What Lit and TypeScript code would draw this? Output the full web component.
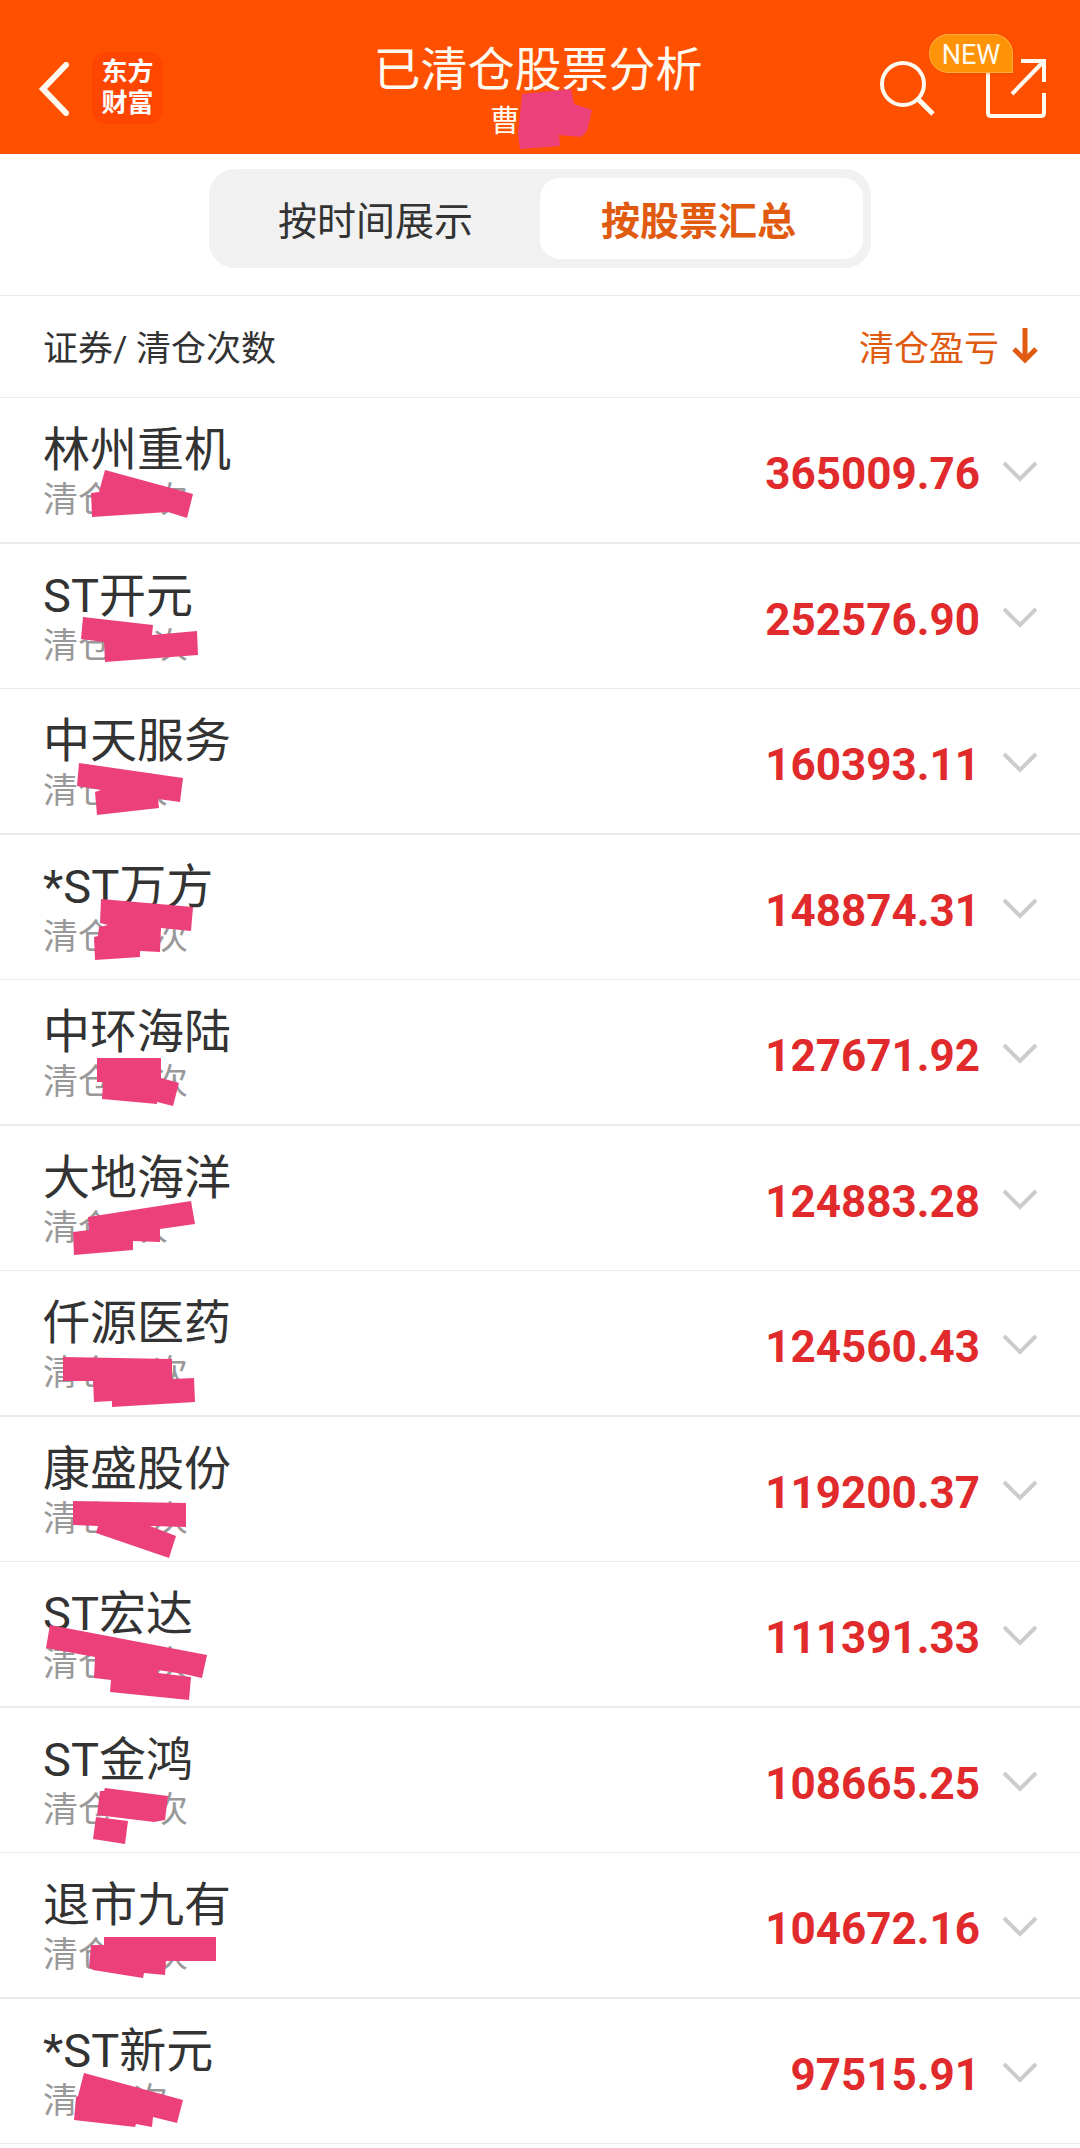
import { LitElement, html, css, svg } from "lit";
import { customElement, property, state } from "lit/decorators.js";
import { classMap } from "lit/directives/class-map.js";

interface Holding {
  name: string;
  amount: string;
  digits: 1 | 2;
  marks: string[];
}

/* marks: marker strokes over the count, in the row's own coordinates */
const HOLDINGS: Holding[] = [
  { name: "林州重机", amount: "365009.76", digits: 2, marks: ["105,72 193,96 187,120 168,114 92,119 91,95 99,94"] },
  { name: "ST开元", amount: "252576.90", digits: 2, marks: ["83,73 153,81 152,91 197,87 198,111 105,118 104,98 81,95"] },
  { name: "中天服务", amount: "160393.11", digits: 1, marks: ["79,74 183,89 180,113 158,110 159,119 97,126 95,103 101,101 77,97"] },
  { name: "*ST万方", amount: "148874.31", digits: 2, marks: ["101,64 193,72 191,96 161,93 160,117 140,116 140,122 95,125 94,102 98,101 99,92 108,90 100,88"] },
  { name: "中环海陆", amount: "127671.92", digits: 2, marks: ["97,78 161,78 161,98 179,103 173,126 157,122 157,124 102,119 103,102 97,102"] },
  { name: "大地海洋", amount: "124883.28", digits: 1, marks: ["88,91 191,75 195,98 160,103 160,116 133,115 133,124 74,129 73,106 89,104"] },
  { name: "仟源医药", amount: "124560.43", digits: 2, marks: ["63,86 172,88 172,108 194,107 195,131 112,136 112,130 94,131 93,110 63,110"] },
  { name: "康盛股份", amount: "119200.37", digits: 2, marks: ["73,84 186,86 186,110 150,109 176,119 169,141 96,116 98,109 73,108"] },
  { name: "ST宏达", amount: "111391.33", digits: 2, marks: ["50,63 207,93 202,116 184,112 158,108 158,111 191,115 189,138 110,130 111,118 94,116 95,95 46,86"] },
  { name: "ST金鸿", amount: "108665.25", digits: 2, marks: ["105,80 168,88 165,112 154,114 97,107 100,83 104,83", "96,109 128,113 125,136 93,131"] },
  { name: "退市九有", amount: "104672.16", digits: 2, marks: ["104,84 216,84 216,108 166,108 165,122 144,120 143,125 93,117 89,114 91,92 104,92"] },
  { name: "*ST新元", amount: "97515.91", digits: 1, marks: ["84,74 183,101 177,124 153,118 152,128 136,125 135,128 74,121 76,98 78,97"] },
];

const FONT = css`
  :host {
    font-family: Roboto, "Noto Sans CJK SC", sans-serif;
  }
  button {
    margin: 0;
    padding: 0;
    border: 0;
    background: none;
    color: inherit;
    font: inherit;
    cursor: pointer;
  }
  svg {
    display: block;
    flex: none;
  }
`;

@customElement("app-header")
class AppHeader extends LitElement {
  static styles = [
    FONT,
    css`
      :host {
        display: grid;
        grid-template-columns: 1fr auto 1fr;
        box-sizing: border-box;
        height: 154px;
        padding: 34px 33px 0;
        background: #ff5000;
        color: #fffaf0;
      }
      .left,
      .right {
        display: flex;
        align-items: flex-start;
      }
      .left {
        gap: 22px;
        padding: 18px 0 0 5px;
      }
      .back {
        padding-top: 10px;
      }
      .logo {
        display: grid;
        justify-content: center;
        align-content: center;
        width: 71px;
        height: 72px;
        border-radius: 14px;
        background: #ff4600;
        color: #fff;
        font-size: 26px;
        font-weight: 700;
        line-height: 31px;
        text-decoration: none;
      }
      .center {
        display: flex;
        flex-direction: column;
        align-items: center;
        padding: 8px 4px 0 0;
      }
      .title {
        margin: 0;
        font-size: 47px;
        font-weight: 400;
        line-height: 56px;
      }
      .account {
        position: relative;
        width: 96px;
        font-size: 30px;
        line-height: 46px;
      }
      .scrub {
        position: absolute;
        left: 28px;
        top: -10px;
      }
      .right {
        justify-content: flex-end;
        gap: 50px;
      }
      .search {
        padding-top: 26px;
      }
      .share {
        position: relative;
        padding-top: 23px;
      }
      .badge {
        position: absolute;
        right: 34px;
        top: 0;
        box-sizing: border-box;
        width: 84px;
        height: 39px;
        border: 1px solid #ffae3c;
        border-radius: 20px 20px 1px 20px;
        background: #ff9307;
        font-size: 27px;
        line-height: 40px;
        text-align: center;
        box-shadow: 0 1px 3px #d8430066;
      }
    `,
  ];

  render() {
    return html`
      <div class="left">
        <button class="back" aria-label="返回">
          <svg width="32" height="54" viewBox="0 0 32 54" fill="none" stroke="currentColor" stroke-width="6">
            <path d="M28 3 5 27 28 51" stroke-linecap="round" />
          </svg>
        </button>
        <a class="logo" href="#"><span>东方</span><span>财富</span></a>
      </div>
      <div class="center">
        <h1 class="title">已清仓股票分析</h1>
        <div class="account">
          曹
          <svg class="scrub" width="76" height="62" viewBox="519 87 76 62" fill="#ec407a" aria-hidden="true">
            <polygon points="523,93 572,88 575,103 593,109 588,130 585,133 582,136 560,134 561,145 521,148 519,133" />
          </svg>
        </div>
      </div>
      <div class="right">
        <button class="search" aria-label="搜索">
          <svg width="56" height="56" viewBox="0 0 56 56" fill="none" stroke="currentColor" stroke-width="4">
            <circle cx="24" cy="24" r="21" />
            <path d="M39 39 54 54" stroke-width="5" />
          </svg>
        </button>
        <button class="share" aria-label="分享">
          <svg width="62" height="62" viewBox="0 0 62 62" fill="none" stroke="currentColor" stroke-width="4">
            <path d="M3 10V56Q3 59 6 59H56Q59 59 59 56V36" />
            <path d="M36 4H59V25M58 5 27 37" />
          </svg>
          <span class="badge">NEW</span>
        </button>
      </div>
    `;
  }
}

@customElement("holding-row")
class HoldingRow extends LitElement {
  @property({ attribute: false }) item!: Holding;
  @state() private open = false;

  static styles = [
    FONT,
    css`
      :host {
        display: block;
        position: relative;
      }
      .row {
        display: flex;
        align-items: center;
        justify-content: space-between;
        box-sizing: border-box;
        width: 100%;
        height: 144px;
        padding: 4px 42px 0 43px;
        text-align: left;
      }
      .info {
        display: grid;
        padding-top: 4px;
      }
      .name {
        color: #333;
        font-size: 47px;
        line-height: 54px;
      }
      .count {
        display: flex;
        color: #999;
        font-size: 35px;
        line-height: 48px;
      }
      .gap {
        width: 20px;
      }
      .gap.wide {
        width: 40px;
      }
      .value {
        display: flex;
        align-items: center;
        gap: 22px;
        color: #e12a2b;
        font-size: 44px;
        font-weight: 700;
        line-height: 52px;
      }
      .amount {
        padding-top: 4px;
      }
      .marks {
        position: absolute;
        left: 0;
        top: 0;
        pointer-events: none;
      }
    `,
  ];

  render() {
    const { name, amount, digits, marks } = this.item;
    return html`
      <button class="row" aria-expanded=${this.open} @click=${() => (this.open = !this.open)}>
        <span class="info">
          <span class="name">${name}</span>
          <span class="count">清仓<span class=${classMap({ gap: true, wide: digits === 2 })}></span>次</span>
        </span>
        <span class="value">
          <span class="amount">${amount}</span>
          <svg width="36" height="22" viewBox="0 0 36 22" fill="none" stroke="#ccc" stroke-width="4">
            <path d="M2 2 18 18 34 2" />
          </svg>
        </span>
      </button>
      <svg class="marks" width="220" height="144" viewBox="0 0 220 144" fill="#ec407a" aria-hidden="true">
        ${marks.map((points) => svg`<polygon points=${points} />`)}
      </svg>
    `;
  }
}

@customElement("app-root")
class AppRoot extends LitElement {
  @state() private mode = "stock";

  static styles = [
    FONT,
    css`
      :host {
        display: block;
        min-height: 100vh;
        background: #fff;
        color: #333;
      }
      .switch {
        display: flex;
        justify-content: center;
        padding: 15px 0 27px;
        border-bottom: 1px solid #ebebeb;
      }
      .segments {
        display: grid;
        grid-template-columns: 1fr 1fr;
        box-sizing: border-box;
        width: 662px;
        padding: 9px 8px;
        border-radius: 26px;
        background: #f1f1f1;
      }
      .segment {
        height: 81px;
        padding: 0 6px 2px 0;
        border-radius: 20px;
        font-size: 39px;
      }
      .segment.active {
        background: #fff;
        color: #e05a10;
        font-weight: 700;
      }
      .columns {
        display: flex;
        align-items: center;
        justify-content: space-between;
        height: 101px;
        padding: 0 42px 0 43px;
        border-bottom: 1px solid #ebebeb;
        font-size: 35px;
        line-height: 50px;
      }
      .label {
        padding-top: 6px;
      }
      .sort {
        display: flex;
        align-items: center;
        gap: 13px;
        color: #e05a10;
      }
      .list {
        margin: 0;
        padding: 0;
        list-style: none;
      }
      .item {
        border-bottom: 1px solid #ebebeb;
      }
      .item:nth-child(odd) {
        border-bottom-width: 2px;
      }
    `,
  ];

  private segment(id: string, label: string) {
    return html`<button
      class=${classMap({ segment: true, active: this.mode === id })}
      role="tab"
      aria-selected=${this.mode === id}
      @click=${() => (this.mode = id)}
    >${label}</button>`;
  }

  render() {
    return html`
      <app-header></app-header>
      <main>
        <div class="switch">
          <div class="segments" role="tablist">
            ${this.segment("time", "按时间展示")}${this.segment("stock", "按股票汇总")}
          </div>
        </div>
        <div class="columns">
          <span class="label">证券/ 清仓次数</span>
          <button class="sort">
            <span class="label">清仓盈亏</span>
            <svg width="26" height="40" viewBox="0 0 26 40" fill="none" stroke="currentColor" stroke-width="5">
              <path d="M13 1V33M2 22 13 33 24 22" />
            </svg>
          </button>
        </div>
        <ul class="list">
          ${HOLDINGS.map((item) => html`<li class="item"><holding-row .item=${item}></holding-row></li>`)}
        </ul>
      </main>
    `;
  }
}
